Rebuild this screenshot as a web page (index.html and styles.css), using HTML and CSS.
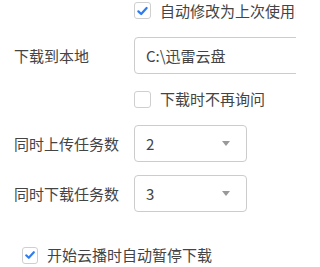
FILE: index.html
```html
<!DOCTYPE html>
<html lang="zh-CN">
<head>
<meta charset="utf-8">
<link rel="stylesheet" href="styles.css">
</head>
<body>
<div class="panel">
  <div class="row row-top">
    <span class="label"></span>
    <label class="check">
      <span class="box checked"><svg viewBox="0 0 16 16" width="16" height="16"><path d="M3.6 8.4 L6.6 11.2 L12.4 4.8" fill="none" stroke="#2f7cf0" stroke-width="2.4" stroke-linecap="round" stroke-linejoin="round"/></svg></span>
      <span class="text">自动修改为上次使用的</span>
    </label>
  </div>
  <div class="row row-field">
    <span class="label">下载到本地</span>
    <div class="input">C:\迅雷云盘</div>
  </div>
  <div class="row row-check2">
    <span class="label"></span>
    <label class="check">
      <span class="box"></span>
      <span class="text">下载时不再询问</span>
    </label>
  </div>
  <div class="row row-sel1">
    <span class="label">同时上传任务数</span>
    <div class="select"><span>2</span><span class="arrow"></span></div>
  </div>
  <div class="row row-sel2">
    <span class="label">同时下载任务数</span>
    <div class="select"><span>3</span><span class="arrow"></span></div>
  </div>
  <div class="row-bottom">
    <label class="check">
      <span class="box checked small"><svg viewBox="0 0 16 16" width="15" height="16"><path d="M3.6 8.4 L6.6 11.2 L12.4 4.8" fill="none" stroke="#2f7cf0" stroke-width="2.4" stroke-linecap="round" stroke-linejoin="round"/></svg></span>
      <span class="text">开始云播时自动暂停下载</span>
    </label>
  </div>
</div>
</body>
</html>
```
FILE: styles.css
```css
html, body {
  margin: 0;
  padding: 0;
  background: #ffffff;
  overflow: hidden;
}
body {
  width: 296px;
  height: 267px;
  font-family: "Noto Sans CJK SC", "Noto Sans", sans-serif;
  font-size: 15px;
  color: #444444;
}
.panel {
  display: flex;
  flex-direction: column;
  width: 296px;
  height: 267px;
  overflow: hidden;
}
.row {
  display: flex;
  align-items: center;
  white-space: nowrap;
}
.label {
  flex: 0 0 120px;
  padding-left: 14px;
  line-height: 20px;
}
.row-top {
  height: 21px;
}
.row-field {
  margin-top: 16px;
  height: 37px;
}
.row-check2 {
  margin-top: 13px;
  height: 24px;
}
.row-sel1 {
  margin-top: 14px;
  height: 37px;
}
.row-sel2 {
  margin-top: 13px;
  height: 37px;
}
.row-bottom {
  margin-top: 31px;
  height: 24px;
  display: flex;
  align-items: center;
  padding-left: 22px;
  white-space: nowrap;
}
.check {
  display: flex;
  align-items: center;
  gap: 9px;
}
.box {
  width: 15px;
  height: 15px;
  border: 1px solid #cfcfcf;
  border-radius: 3px;
  background: #fff;
  display: flex;
  align-items: center;
  justify-content: center;
  flex: 0 0 auto;
}
.box svg {
  display: block;
}
.box.small {
  width: 14px;
}
.text {
  line-height: 20px;
}
.input {
  box-sizing: border-box;
  flex: 0 0 auto;
  width: 180px;
  height: 37px;
  border: 1px solid #cccccc;
  border-radius: 4px;
  padding-left: 11px;
  display: flex;
  align-items: center;
}
.select {
  box-sizing: border-box;
  flex: 0 0 auto;
  width: 113px;
  height: 37px;
  border: 1px solid #cccccc;
  border-radius: 4px;
  padding: 0 16px 0 11px;
  display: flex;
  align-items: center;
  justify-content: space-between;
}
.arrow {
  width: 0;
  height: 0;
  border-left: 4px solid transparent;
  border-right: 4px solid transparent;
  border-top: 5px solid #999999;
}
```
